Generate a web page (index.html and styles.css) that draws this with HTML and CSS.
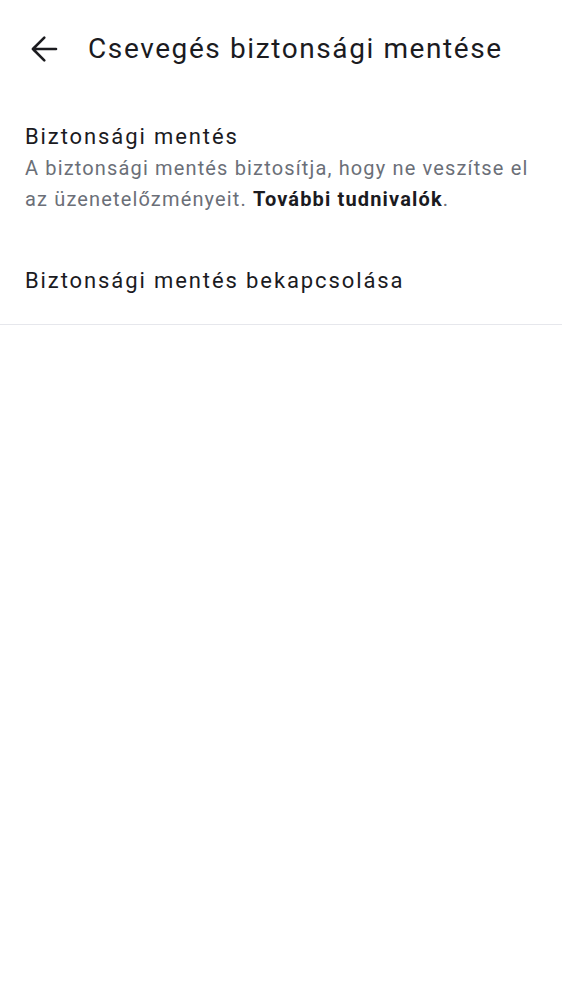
FILE: index.html
```html
<!DOCTYPE html>
<html lang="hu">
<head>
<meta charset="utf-8">
<link rel="stylesheet" href="styles.css">
</head>
<body>
<header class="bar">
  <button class="back" aria-label="Vissza">
    <svg width="36" height="36" viewBox="0 0 24 24"><path d="M20 12H4.6M12.2 4.4L4.6 12l7.6 7.6" fill="none" stroke="#1b1b1f" stroke-width="1.75" stroke-linecap="round" stroke-linejoin="round"/></svg>
  </button>
  <h1 class="title">Csevegés biztonsági mentése</h1>
</header>
<section class="item">
  <div class="item-title">Biztonsági mentés</div>
  <div class="item-sub">A biztonsági mentés biztosítja, hogy ne veszítse el az üzenetelőzményeit. <b>További tudnivalók</b>.</div>
</section>
<section class="item toggle">
  <div class="item-title">Biztonsági mentés bekapcsolása</div>
</section>
</body>
</html>
```
FILE: styles.css
```css
* { box-sizing: border-box; }
body {
  margin: 0;
  background: #fff;
  font-family: Roboto, "Noto Sans", sans-serif;
  color: #1b1b1f;
}
.bar {
  display: flex;
  align-items: center;
  height: 97px;
  padding: 0 0 0 26px;
}
.back {
  border: 0;
  background: none;
  padding: 0;
  width: 36px;
  height: 36px;
  display: flex;
  margin-right: 26px;
}
.title {
  margin: 0;
  font-size: 28px;
  font-weight: 400;
  letter-spacing: 1.6px;
}
.item {
  padding: 23px 25px 26px;
}
.item-title {
  font-size: 22px;
  line-height: 33px;
  letter-spacing: 1.9px;
}
.item-sub {
  font-size: 20px;
  line-height: 31px;
  letter-spacing: 1.15px;
  color: #6b6f78;
}
.item-sub b {
  color: #1b1b1f;
  font-weight: 700;
}
.toggle {
  padding: 23px 25px 27px;
  border-bottom: 1px solid #e6e7ec;
}
```
